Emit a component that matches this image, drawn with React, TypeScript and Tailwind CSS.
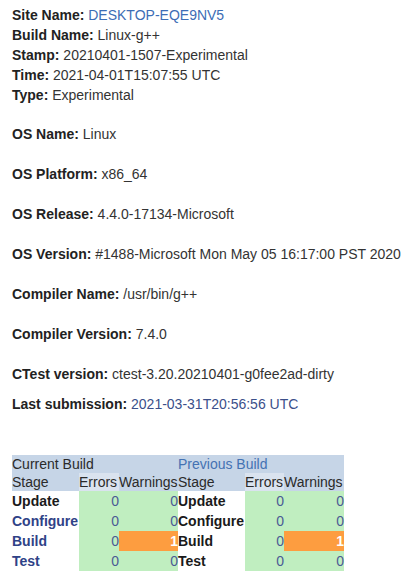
type Stage = { name: string; link: boolean; errors: number; warnings: number };

const current: Stage[] = [
  { name: "Update", link: false, errors: 0, warnings: 0 },
  { name: "Configure", link: true, errors: 0, warnings: 0 },
  { name: "Build", link: true, errors: 0, warnings: 1 },
  { name: "Test", link: true, errors: 0, warnings: 0 },
];

const previous: Stage[] = [
  { name: "Update", link: false, errors: 0, warnings: 0 },
  { name: "Configure", link: false, errors: 0, warnings: 0 },
  { name: "Build", link: false, errors: 0, warnings: 1 },
  { name: "Test", link: false, errors: 0, warnings: 0 },
];

function Row({ label, value, blue }: { label: string; value: string; blue?: string }) {
  return (
    <div className="h-5 leading-5 whitespace-nowrap">
      <b className="font-bold text-[#222]">{label}</b>{" "}
      <span className={blue ? blue : "text-[#333]"}>{value}</span>
    </div>
  );
}

function BuildTable({ title, rows, titleLink, widths }: { title: string; rows: Stage[]; titleLink?: boolean; widths: [string, string, string] }) {
  return (
    <table className="border-collapse text-[14px] leading-[18px]">
      <tbody>
        <tr className="h-[18px] bg-[#c6d5e7]">
          <td colSpan={3} className={"p-0 " + (titleLink ? "text-[#4472b3]" : "text-[#2a2a2a]")}>
            {title}
          </td>
        </tr>
        <tr className="h-[18px]">
          <td className={"p-0 bg-[#c6d5e7] text-[#2a2a2a] " + widths[0]}>Stage</td>
          <td className={"p-0 bg-[#dae3ef] text-[#2a2a2a] " + widths[1]}>Errors</td>
          <td className={"p-0 bg-[#c6d5e7] text-[#2a2a2a] " + widths[2]}>Warnings</td>
        </tr>
        {rows.map((r) => (
          <tr key={r.name} className="h-5">
            <td className={"p-0 font-bold " + (r.link ? "text-[#2f4287]" : "text-[#1a1a1a]")}>{r.name}</td>
            <td className="p-0 bg-[#c0eec0] text-right text-[#4a5a95]">{r.errors}</td>
            <td
              className={
                "p-0 text-right " +
                (r.warnings > 0 ? "bg-[#fd9d40] text-white font-bold" : "bg-[#c0eec0] text-[#4a5a95]")
              }
            >
              {r.warnings}
            </td>
          </tr>
        ))}
      </tbody>
    </table>
  );
}

export default function App() {
  return (
    <div className="min-h-[583px] w-[419px] bg-white pl-3 pt-[5px] text-[14px] text-[#333]" style={{ fontFamily: '"Liberation Sans", Arial, sans-serif' }}>
      <div className="flex flex-col gap-[-1px]">
        <Row label="Site Name:" value="DESKTOP-EQE9NV5" blue="text-[#3d6db5]" />
        <Row label="Build Name:" value="Linux-g++" />
        <Row label="Stamp:" value="20210401-1507-Experimental" />
        <Row label="Time:" value="2021-04-01T15:07:55 UTC" />
        <Row label="Type:" value="Experimental" />
      </div>

      <div className="mt-[19px] flex flex-col gap-5">
        <Row label="OS Name:" value="Linux" />
        <Row label="OS Platform:" value="x86_64" />
        <Row label="OS Release:" value="4.4.0-17134-Microsoft" />
        <Row label="OS Version:" value="#1488-Microsoft Mon May 05 16:17:00 PST 2020" />
        <Row label="Compiler Name:" value="/usr/bin/g++" />
        <Row label="Compiler Version:" value="7.4.0" />
        <Row label="CTest version:" value="ctest-3.20.20210401-g0fee2ad-dirty" />
      </div>
      <div className="mt-[10px]">
        <Row label="Last submission:" value="2021-03-31T20:56:56 UTC" blue="text-[#3b4f8a]" />
      </div>

      <div className="mt-[41px] flex items-start">
        <BuildTable title="Current Build" rows={current} widths={["w-[67px]", "w-[40px]", "w-[59px]"]} />
        <BuildTable title="Previous Build" rows={previous} titleLink widths={["w-[67px]", "w-[39px]", "w-[60px]"]} />
      </div>
    </div>
  );
}
